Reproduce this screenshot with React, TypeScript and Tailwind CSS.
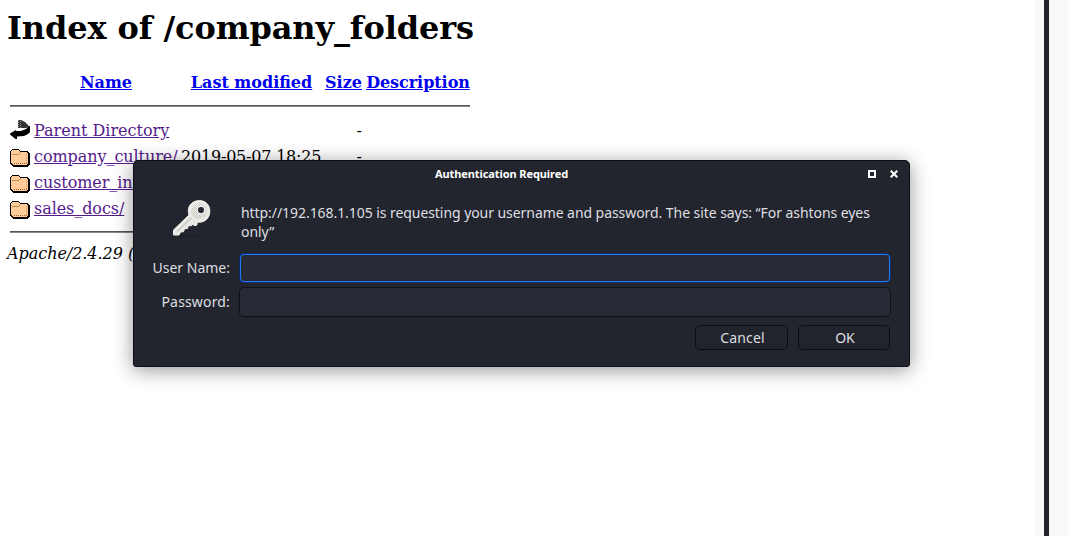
import React from "react";

function FolderIcon() {
  return (
    <svg width="20" height="22" viewBox="0 0 20 22" className="block" shapeRendering="crispEdges">
      <path d="M2 3h7v1h1v1h8v1h1v1h1v12h-1v1h-1v1H3v-1H2v-1H1v-1H0V5h1V4h1z" fill="#000" />
      <path d="M2 4h7v1h1v1h7v1h1v11h-1v1H3v-1H2v-1H1V5h1z" fill="#ffcc99" />
      <path d="M2 8h7v-1h1v-1h1v1h-1v1h-1v1H2z" fill="#c08a57" />
      <path d="M16.500 8v10" stroke="#c9935f" strokeDasharray="1 1" />
      <path d="M4 17.500h13" stroke="#996633" strokeDasharray="1 1" />
    </svg>
  );
}

function BackIcon() {
  return (
    <svg width="20" height="22" viewBox="0 0 20 22" className="block">
      <path d="M8 0h3l4 2 3 3 1 2-3 1H8z" fill="#333" />
      <path d="M8.500 0v8M10.500 1v7" stroke="#999" strokeDasharray="1 1" />
      <path d="M20 6v6l-2 2-4 2-7 .5V19H5.500L0 14.500v-1L6 10v1h5l5-2 3-3z" fill="#000" />
    </svg>
  );
}

function KeyIcon() {
  return (
    <svg width="40" height="38" viewBox="0 0 40 38" className="block">
      <defs>
        <linearGradient id="metal" x1="0" y1="0" x2="1" y2="1">
          <stop offset="0" stopColor="#ffffff" />
          <stop offset=".55" stopColor="#e6e6e1" />
          <stop offset="1" stopColor="#f5f5f0" />
        </linearGradient>
        <pattern id="grain" width="2" height="2" patternUnits="userSpaceOnUse">
          <path d="M0 0h1v1H0zM1 1h1v1H1z" fill="#cdcdc8" />
        </pattern>
      </defs>
      <ellipse cx="17" cy="35.500" rx="15" ry="1" fill="#1f2129" />
      <path d="M17 15L1.500 30V35H7l1.500-3 3-.3 1-3 3-.2 1-3 3 .3 1-1.500 2.500 1.500 2-1V22.200c7 .8 12.800-3.500 12.800-11C37.800 4.500 33 .6 27.500.6 21 .6 16.500 5 16.300 10.500c0 1.600.2 3 .7 4.500z" fill="url(#metal)" stroke="#f4f4f0" strokeWidth="1" />
      <circle cx="27" cy="11" r="8" fill="url(#grain)" />
      <path d="M19 18L5 31.500" stroke="#c8c8c3" strokeWidth="1.400" />
      <circle cx="29" cy="10" r="4" fill="#c0c0bc" stroke="#fff" strokeWidth=".8" />
      <circle cx="29" cy="10" r="2.900" fill="#242630" />
    </svg>
  );
}

const rows = [
  { name: "Parent Directory", date: "", size: "-", parent: true },
  { name: "company_culture/", date: "2019-05-07 18:25", size: "-", parent: false },
  { name: "customer_info/", date: "", size: "", parent: false },
  { name: "sales_docs/", date: "", size: "", parent: false },
];

const cols = "grid grid-cols-[25px_143px_4px_140px_4px_37px_4px_104px]";

function Listing() {
  return (
    <main className="w-[480px] pl-[9px] pt-[8px] font-['DejaVu_Serif',serif] text-[16px] text-black">
      <h1 className="-ml-[2px] h-[40px] whitespace-nowrap text-[32px] font-bold leading-[40px] tracking-[-0.11px]">Index of /company_folders</h1>
      <div className={`${cols} mt-[25px] h-[20px] whitespace-nowrap text-center font-bold leading-[20px] text-[#0000ee]`}>
        <span />
        <a className="ml-[1px] underline">Name</a>
        <span />
        <a className="ml-[1px] underline">Last modified</a>
        <span />
        <a className="underline">Size</a>
        <span />
        <a className="tracking-[-0.05px] underline">Description</a>
      </div>
      <div className="ml-[1px] mt-[12px] h-[2px] w-[460px] border-b border-[#888] bg-[#555]" />
      <div className="mt-[11px]">
        {rows.map((r) => (
          <div key={r.name} className={`${cols} h-[26px] items-center whitespace-nowrap leading-[20px]`}>
            <span className="ml-[1px]">{r.parent ? <BackIcon /> : <FolderIcon />}</span>
            <a className={r.parent ? "justify-self-start text-[#551a8b] underline" : "justify-self-start tracking-[-0.06px] text-[#551a8b] underline"}>{r.name}</a>
            <span />
            <span className="tracking-[-0.2px]">{r.date}</span>
            <span />
            <span className="text-right">{r.size}</span>
          </div>
        ))}
      </div>
      <div className="ml-[1px] mt-[9px] h-[2px] w-[460px] border-b border-[#888] bg-[#555]" />
      <address className="-ml-[2px] mt-[11px] whitespace-nowrap italic leading-[20px] tracking-[-0.04px]">Apache/2.4.29 (</address>
    </main>
  );
}

function Dialog() {
  return (
    <section className="absolute left-[133px] top-[160px] h-[207px] w-[777px] rounded-[5px] rounded-b-[3px] border border-[#0e0f14] bg-[#23252e] font-['Noto_Sans',sans-serif] text-[14px] text-[#dedfe1] shadow-[0_3px_20px_rgba(0,0,0,0.42)]">
      <header className="flex h-[26px] items-center pl-[301px] pr-[11px]">
        <h2 className="whitespace-nowrap text-[11px] font-bold tracking-[-0.09px] text-white">Authentication Required</h2>
        <div className="ml-auto flex items-center gap-[14px]">
          <span className="h-[8px] w-[8px] border-2 border-white" />
          <svg width="8" height="8" viewBox="0 0 8 8">
            <path d="M.7.700l6.600 6.600M7.300.700L.7 7.300" stroke="#fff" strokeWidth="2" />
          </svg>
        </div>
      </header>
      <div className="flex h-[67px] pl-[38px] pt-[13px]">
        <KeyIcon />
        <p className="ml-[29px] mt-[3px] whitespace-nowrap leading-[19px] tracking-[-0.062px]">
          http://192.168.1.105 is requesting your username and password. The site says: “For ashtons eyes
          <br />
          only”
        </p>
      </div>
      <label className="flex h-[28px] items-center">
        <span className="w-[96px] whitespace-nowrap pb-[2px] text-right">User Name:</span>
        <input className="ml-[10px] h-[28px] w-[650px] rounded-[4px] border border-[#2678f5] bg-[#282a35] shadow-[0_0_0_1px_#082c6b] outline-none" />
      </label>
      <label className="mt-[5px] flex h-[30px] items-center">
        <span className="w-[96px] whitespace-nowrap pb-[2px] text-right tracking-[0.16px]">Password:</span>
        <input type="password" className="ml-[9px] h-[30px] w-[652px] rounded-[5px] border border-[#101116] bg-[#282a35] outline-none" />
      </label>
      <footer className="mt-[8px] flex justify-end gap-[10px] pr-[19px]">
        <button className="h-[25px] w-[93px] rounded-[5px] border border-[#0c0d11] bg-[#22242d] pl-[2px] leading-[23px] tracking-[0.15px]">Cancel</button>
        <button className="h-[25px] w-[92px] rounded-[5px] border border-[#0c0d11] bg-[#22242d] pl-[2px] leading-[23px]">OK</button>
      </footer>
    </section>
  );
}

export default function App() {
  return (
    <div className="relative flex h-[536px] w-[1068px] overflow-hidden bg-white">
      <Listing />
      <aside className="ml-auto flex h-full w-[33px] bg-[#f9f9f9]">
        <div className="ml-[9px] w-[5px] bg-[#23252e]" />
      </aside>
      <Dialog />
    </div>
  );
}
